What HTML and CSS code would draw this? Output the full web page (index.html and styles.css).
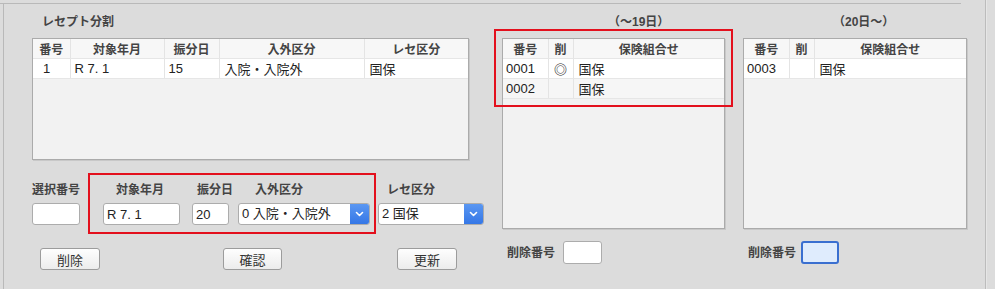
FILE: index.html
```html
<!DOCTYPE html>
<html lang="ja">
<head>
<meta charset="utf-8">
<link rel="stylesheet" href="styles.css">
</head>
<body>
<div class="panel">
  <div class="content">
    <section class="left">
      <div class="title">レセプト分割</div>
      <div class="grid grid-main">
        <table>
          <colgroup><col style="width:37px"><col style="width:94px"><col style="width:55px"><col style="width:145px"><col style="width:104px"></colgroup>
          <thead><tr><th>番号</th><th>対象年月</th><th>振分日</th><th>入外区分</th><th>レセ区分</th></tr></thead>
          <tbody><tr class="r-white"><td class="c-no">1</td><td>R 7. 1</td><td>15</td><td class="c-pad">入院・入院外</td><td class="c-pad">国保</td></tr></tbody>
        </table>
      </div>
      <div class="form-row">
        <div class="field f-sel">
          <span class="lbl">選択番号</span>
          <input class="txt w-sel" value="">
        </div>
        <div class="field f-ym">
          <span class="lbl">対象年月</span>
          <input class="txt w-ym" value="R 7. 1">
        </div>
        <div class="field f-day">
          <span class="lbl">振分日</span>
          <input class="txt w-day" value="20">
        </div>
        <div class="field f-kbn">
          <span class="lbl">入外区分</span>
          <div class="select w-kbn"><span class="sel-text">0 入院・入院外</span><span class="sel-arrow"><svg width="9" height="6" viewBox="0 0 9 6"><path d="M1.5 1.5 L4.5 4.5 L7.5 1.5" fill="none" stroke="#fff" stroke-width="1.6" stroke-linecap="round" stroke-linejoin="round"/></svg></span></div>
        </div>
        <div class="field f-rece">
          <span class="lbl">レセ区分</span>
          <div class="select w-rece"><span class="sel-text">2 国保</span><span class="sel-arrow"><svg width="9" height="6" viewBox="0 0 9 6"><path d="M1.5 1.5 L4.5 4.5 L7.5 1.5" fill="none" stroke="#fff" stroke-width="1.6" stroke-linecap="round" stroke-linejoin="round"/></svg></span></div>
        </div>
      </div>
      <div class="btn-row">
        <button class="btn b-del">削除</button>
        <button class="btn b-ok">確認</button>
        <button class="btn b-upd">更新</button>
      </div>
      <div class="mark mark-form"></div>
    </section>

    <section class="side side-a">
      <div class="cap cap-a">（〜19日）</div>
      <div class="grid grid-side">
        <table>
          <colgroup><col style="width:45px"><col style="width:25px"><col></colgroup>
          <thead><tr><th>番号</th><th>削</th><th>保険組合せ</th></tr></thead>
          <tbody>
            <tr class="r-white"><td class="c-num">0001</td><td class="c-mark">◎</td><td class="c-pad">国保</td></tr>
            <tr class="r-gray"><td class="c-num">0002</td><td class="c-mark"></td><td class="c-pad">国保</td></tr>
          </tbody>
        </table>
      </div>
      <div class="del-row">
        <span class="lbl">削除番号</span>
        <input class="txt w-del" value="">
      </div>
      <div class="mark mark-side"></div>
    </section>

    <section class="side side-b">
      <div class="cap cap-b">（20日〜）</div>
      <div class="grid grid-side">
        <table>
          <colgroup><col style="width:45px"><col style="width:25px"><col></colgroup>
          <thead><tr><th>番号</th><th>削</th><th>保険組合せ</th></tr></thead>
          <tbody>
            <tr class="r-white"><td class="c-num">0003</td><td class="c-mark"></td><td class="c-pad">国保</td></tr>
          </tbody>
        </table>
      </div>
      <div class="del-row">
        <span class="lbl">削除番号</span>
        <input class="txt w-del focus" value="">
      </div>
    </section>
  </div>
</div>
<div class="vline"></div>
</body>
</html>
```

FILE: styles.css
```css
* { box-sizing: border-box; }
html, body { margin: 0; padding: 0; }
body {
  width: 995px;
  height: 289px;
  overflow: hidden;
  background: #dcdcdc;
  display: flex;
  font-family: "Liberation Sans", "Noto Sans CJK JP", sans-serif;
  color: #333;
}
.panel {
  flex-shrink: 0;
  margin: 3px 0 0 0;
  width: 961px;
  border-top: 1px solid #b9b9b9;
  padding-left: 3px;
  position: relative;
}
.panel::before {
  content: "";
  position: absolute;
  left: 3px;
  top: 0;
  bottom: 0;
  width: 1px;
  background: #b9b9b9;
}
.vline {
  flex-shrink: 0;
  margin-left: 24px;
  width: 1px;
  background: #bcbcbc;
  box-shadow: 1px 0 0 #e6e6e6;
}
.content {
  display: flex;
  padding-left: 29px;
  gap: 18px;
}
.left, .side { flex-shrink: 0; position: relative; }
.left { width: 452px; }
.side-a { width: 223px; }
.side-b { width: 224px; }

.title {
  margin: 10px 0 0 10px;
  height: 16px;
  line-height: 16px;
  font-size: 12px;
  font-weight: bold;
  color: #444;
}
.cap {
  margin-top: 10px;
  height: 16px;
  line-height: 16px;
  font-size: 12px;
  font-weight: bold;
  color: #444;
  white-space: nowrap;
}
.cap-a { padding-left: 106px; }
.cap-b { padding-left: 90px; }

.grid {
  margin-top: 8px;
  border: 1px solid #ababab;
  box-shadow: 1px 1px 0 #c8c8c8;
  background: #f2f2f2;
  overflow: hidden;
}
.grid-main { width: 437px; height: 122px; }
.grid-side { height: 191px; }

table {
  width: 100%;
  border-collapse: collapse;
  table-layout: fixed;
}
th {
  height: 19px;
  padding: 0;
  background: #f7f7f7;
  font-size: 12px;
  font-weight: bold;
  color: #444;
  text-align: center;
  border-left: 1px solid #e4e4e4;
  border-bottom: 1px solid #e6e6e6;
}
th:first-child, td:first-child { border-left: none; }
td {
  height: 18px;
  padding: 0 0 0 4px;
  font-size: 13px;
  color: #222;
  white-space: nowrap;
  border-left: 1px solid #e4e4e4;
  border-bottom: 1px solid #e6e6e6;
}
.r-white td { background: #fff; }
.r-gray td { background: #f6f6f6; }
td.c-no { padding-left: 10px; }
td.c-pad { padding-left: 5px; }
td.c-num { padding-left: 3px; }
td.c-mark { padding: 0; text-align: center; font-size: 13px; font-weight: bold; color: #333; }

.form-row {
  display: flex;
  margin-top: 22px;
}
.field { display: flex; flex-direction: column; flex-shrink: 0; }
.lbl {
  height: 16px;
  line-height: 16px;
  font-size: 12px;
  font-weight: bold;
  color: #444;
  white-space: nowrap;
}
.field .lbl { margin-bottom: 5px; width: 0; }
.f-ym { margin-left: 23px; }
.f-ym .lbl { padding-left: 13px; }
.f-day { margin-left: 12px; }
.f-day .lbl { padding-left: 5px; }
.f-kbn { margin-left: 9px; }
.f-kbn .lbl { padding-left: 17px; }
.f-rece { margin-left: 8px; }
.f-rece .lbl { padding-left: 9px; }

.txt {
  height: 22px;
  margin: 0;
  padding: 0 3px;
  border: 1px solid #acacac;
  border-radius: 3px;
  background: #fff;
  font-family: "Liberation Sans", "Noto Sans CJK JP", sans-serif;
  font-size: 13px;
  color: #222;
  outline: none;
}
.w-sel { width: 48px; }
.w-ym { width: 77px; }
.w-day { width: 37px; }
.w-del { width: 39px; height: 23px; }
.txt.focus {
  width: 38px;
  border: 2px solid #3a6fd0;
  background: #dfecfd;
}

.select {
  display: flex;
  height: 22px;
  border: 1px solid #acacac;
  border-radius: 3px;
  background: #fff;
  overflow: hidden;
}
.w-kbn { width: 132px; }
.w-rece { width: 106px; }
.sel-text {
  flex: 1;
  line-height: 20px;
  padding-left: 3px;
  font-size: 13px;
  color: #222;
  white-space: nowrap;
}
.sel-arrow {
  width: 19px;
  display: flex;
  align-items: center;
  justify-content: center;
  background: linear-gradient(#5a97f2, #3577e6);
}

.btn-row { display: flex; margin-top: 23px; }
.btn {
  flex-shrink: 0;
  height: 22px;
  padding: 0;
  border: 1px solid #9c9c9c;
  border-radius: 3px;
  background: linear-gradient(#fefefe, #ececec);
  font-family: "Liberation Sans", "Noto Sans CJK JP", sans-serif;
  font-size: 13px;
  color: #333;
}
.b-del { width: 60px; margin-left: 8px; }
.b-ok { width: 59px; margin-left: 123px; }
.b-upd { width: 60px; margin-left: 115px; }

.del-row {
  display: flex;
  align-items: center;
  margin-top: 12px;
  padding-left: 5px;
  gap: 8px;
}
.side-b .del-row { gap: 5px; }

.mark {
  position: absolute;
  border: 2px solid #e3101d;
  pointer-events: none;
}
.mark-form { left: 56px; top: 169px; width: 288px; height: 61px; }
.mark-side { left: -8px; top: 25px; width: 239px; height: 78px; }
```
